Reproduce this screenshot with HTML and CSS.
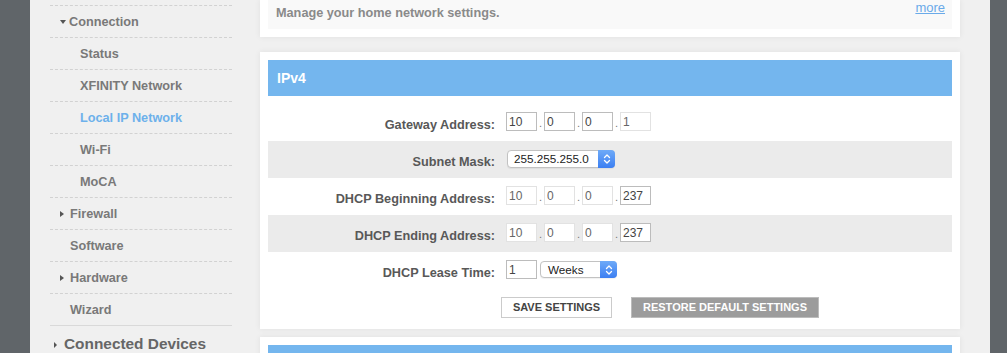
FILE: index.html
```html
<!DOCTYPE html>
<html>
<head>
<meta charset="utf-8">
<link rel="stylesheet" href="styles.css">
</head>
<body>
<div class="page">
  <div class="edge"></div>
  <aside class="sidebar">
    <ul class="nav">
      <li class="nav-item has-tri"><span class="tri-down"></span>Connection</li>
      <li class="nav-item sub">Status</li>
      <li class="nav-item sub">XFINITY Network</li>
      <li class="nav-item sub active">Local IP Network</li>
      <li class="nav-item sub">Wi-Fi</li>
      <li class="nav-item sub">MoCA</li>
      <li class="nav-item has-tri"><span class="tri-right"></span>Firewall</li>
      <li class="nav-item">Software</li>
      <li class="nav-item has-tri"><span class="tri-right"></span>Hardware</li>
      <li class="nav-item">Wizard</li>
    </ul>
    <div class="nav-section"><span class="tri-small"></span>Connected Devices</div>
  </aside>
  <main class="main">
    <section class="panel intro">
      <div class="intro-box">
        <p class="intro-text">Manage your home network settings.</p>
        <a class="more" href="#">more</a>
      </div>
    </section>
    <section class="panel ipv4">
      <h2 class="panel-head">IPv4</h2>
      <div class="form">
        <div class="row">
          <label class="label">Gateway Address:</label>
          <div class="fields">
            <input class="ip" type="text" value="10" readonly><span class="dot">.</span>
            <input class="ip" type="text" value="0" readonly><span class="dot">.</span>
            <input class="ip" type="text" value="0" readonly><span class="dot">.</span>
            <input class="ip off" type="text" value="1" readonly>
          </div>
        </div>
        <div class="row shade">
          <label class="label">Subnet Mask:</label>
          <div class="fields">
            <div class="select wide"><span class="select-val">255.255.255.0</span><span class="stepper"><svg width="8" height="12" viewBox="0 0 8 12"><path d="M1.5 4.5 L4 2 L6.5 4.5 M1.5 7.5 L4 10 L6.5 7.5" fill="none" stroke="#fff" stroke-width="1.3" stroke-linecap="round" stroke-linejoin="round"/></svg></span></div>
          </div>
        </div>
        <div class="row">
          <label class="label">DHCP Beginning Address:</label>
          <div class="fields">
            <input class="ip off" type="text" value="10" readonly><span class="dot">.</span>
            <input class="ip off" type="text" value="0" readonly><span class="dot">.</span>
            <input class="ip off" type="text" value="0" readonly><span class="dot">.</span>
            <input class="ip" type="text" value="237" readonly>
          </div>
        </div>
        <div class="row shade">
          <label class="label">DHCP Ending Address:</label>
          <div class="fields">
            <input class="ip off" type="text" value="10" readonly><span class="dot">.</span>
            <input class="ip off" type="text" value="0" readonly><span class="dot">.</span>
            <input class="ip off" type="text" value="0" readonly><span class="dot">.</span>
            <input class="ip" type="text" value="237" readonly>
          </div>
        </div>
        <div class="row">
          <label class="label">DHCP Lease Time:</label>
          <div class="fields">
            <input class="ip" type="text" value="1" readonly>
            <div class="select narrow"><span class="select-val">Weeks</span><span class="stepper"><svg width="8" height="12" viewBox="0 0 8 12"><path d="M1.5 4.5 L4 2 L6.5 4.5 M1.5 7.5 L4 10 L6.5 7.5" fill="none" stroke="#fff" stroke-width="1.3" stroke-linecap="round" stroke-linejoin="round"/></svg></span></div>
          </div>
        </div>
      </div>
      <div class="actions">
        <button class="btn btn-save" type="button">SAVE SETTINGS</button>
        <button class="btn btn-restore" type="button">RESTORE DEFAULT SETTINGS</button>
      </div>
    </section>
    <section class="panel next">
      <h2 class="panel-head"></h2>
    </section>
  </main>
  <div class="gutter"></div>
  <div class="edge edge-right"></div>
</div>
</body>
</html>
```
FILE: styles.css
```css
* { box-sizing: border-box; }
html, body { margin: 0; padding: 0; height: 353px; overflow: hidden; }
body { background: #f0f0f0; font-family: "Liberation Sans", Arial, sans-serif; }

.page { display: flex; height: 353px; }
.edge { width: 30px; flex: none; background: #606569; }
.edge-right { width: 17px; }
.gutter { width: 30px; flex: none; }

/* sidebar */
.sidebar { width: 230px; flex: none; padding-left: 20px; }
.nav { list-style: none; margin: 0; padding: 5px 0 0; width: 182px; border-bottom: 1px solid #d9d9d9; }
.nav-item {
  height: 32px; border-top: 1px dashed #d2d2d2; padding-top: 1px;
  line-height: 31px; font-size: 12.7px; font-weight: bold; color: #797979;
  padding-left: 20px; white-space: nowrap;
}
.nav-item.has-tri { padding-left: 10px; }
.nav-item.sub { padding-left: 30px; }
.nav-item.active { color: #6db1eb; }
.tri-down {
  display: inline-block; width: 0; height: 0; vertical-align: middle;
  border-left: 3.5px solid transparent; border-right: 3.5px solid transparent;
  border-top: 4px solid #555; margin: -2px 3px 0 0;
}
.tri-right {
  display: inline-block; width: 0; height: 0; vertical-align: middle;
  border-top: 3.5px solid transparent; border-bottom: 3.5px solid transparent;
  border-left: 4px solid #555; margin: -2px 6px 0 0;
}
.nav-section {
  height: 34px; line-height: 34px; padding: 1px 0 0 4px;
  font-size: 15.4px; font-weight: bold; color: #666; white-space: nowrap;
}
.tri-small {
  display: inline-block; width: 0; height: 0; vertical-align: middle;
  border-top: 3px solid transparent; border-bottom: 3px solid transparent;
  border-left: 3.5px solid #555; margin: 0 7px 0 0;
}

/* main */
.main { width: 700px; flex: none; }
.panel { background: #fff; padding: 8px; box-shadow: 0 0 6px rgba(0,0,0,0.07); }
.intro { padding-top: 0; margin-bottom: 15px; }
.intro-box {
  height: 29px; background: #f9f9f9; display: flex; justify-content: space-between;
  align-items: flex-start; padding: 0 7px 0 8px;
}
.intro-text { margin: 6px 0 0; font-size: 12.7px; line-height: 15px; font-weight: bold; color: #8a8a8a; }
.more { margin-top: 0; font-size: 13px; line-height: 15px; color: #6aaae9; text-decoration: underline; }

.panel-head {
  margin: 0; height: 36px; line-height: 36px; background: #74b6ee; color: #fff;
  font-size: 14px; font-weight: bold; padding-left: 9px;
}
.ipv4 { padding-bottom: 11px; }
.form { margin-top: 8px; }
.row {
  display: grid; grid-template-columns: 227px auto; column-gap: 11px;
  height: 37px; padding-top: 8px; align-items: start;
}
.row.shade { background: #ebebeb; }
.label {
  text-align: right; padding-top: 6px; line-height: 15px;
  font-size: 12.7px; font-weight: bold; color: #585858; white-space: nowrap;
}
.fields { display: flex; align-items: center; height: 19px; }
.ip {
  width: 31px; height: 19px; margin: 0; border: 1px solid #bcbcbc; border-radius: 0;
  padding: 0 2px; background: #fff; font-family: "Liberation Sans", Arial, sans-serif;
  font-size: 12px; color: #444; outline: none;
}
.ip.off { border-color: #e2e2e2; color: #666; }
.dot { width: 7px; text-align: center; font-size: 11px; color: #777; line-height: 19px; padding-top: 3px; }
.select {
  display: flex; height: 18px; border: 1px solid #c2c2c2; border-radius: 4px; background: #fff;
  box-shadow: 0 1px 1px rgba(0,0,0,0.06);
}
.select.wide { width: 108px; margin-left: 1px; }
.select.narrow { width: 77px; height: 17px; margin-left: 3px; }
.select-val { flex: 1; padding-left: 6px; font-size: 11.7px; line-height: 16px; color: #222; }
.select.narrow .select-val { padding-left: 7px; line-height: 15px; }
.stepper {
  width: 17px; margin: -1px -1px -1px 0; border-radius: 0 4px 4px 0;
  background: linear-gradient(#6eaaf8, #3c7ff2);
  display: flex; align-items: center; justify-content: center;
}

.actions { padding: 8px 0 0 233px; display: flex; gap: 19px; }
.btn {
  height: 21px; margin: 0; font-family: "Liberation Sans", Arial, sans-serif;
  font-size: 11px; font-weight: bold; line-height: 19px; border-radius: 0; cursor: pointer;
}
.btn-save { width: 111px; padding: 0; background: #fff; border: 1px solid #cbcbcb; color: #444; }
.btn-restore { width: 188px; padding: 0; background: #9c9c9c; border: 1px solid #bcbcbc; color: #fff; }

.next { margin-top: 8px; }
```
